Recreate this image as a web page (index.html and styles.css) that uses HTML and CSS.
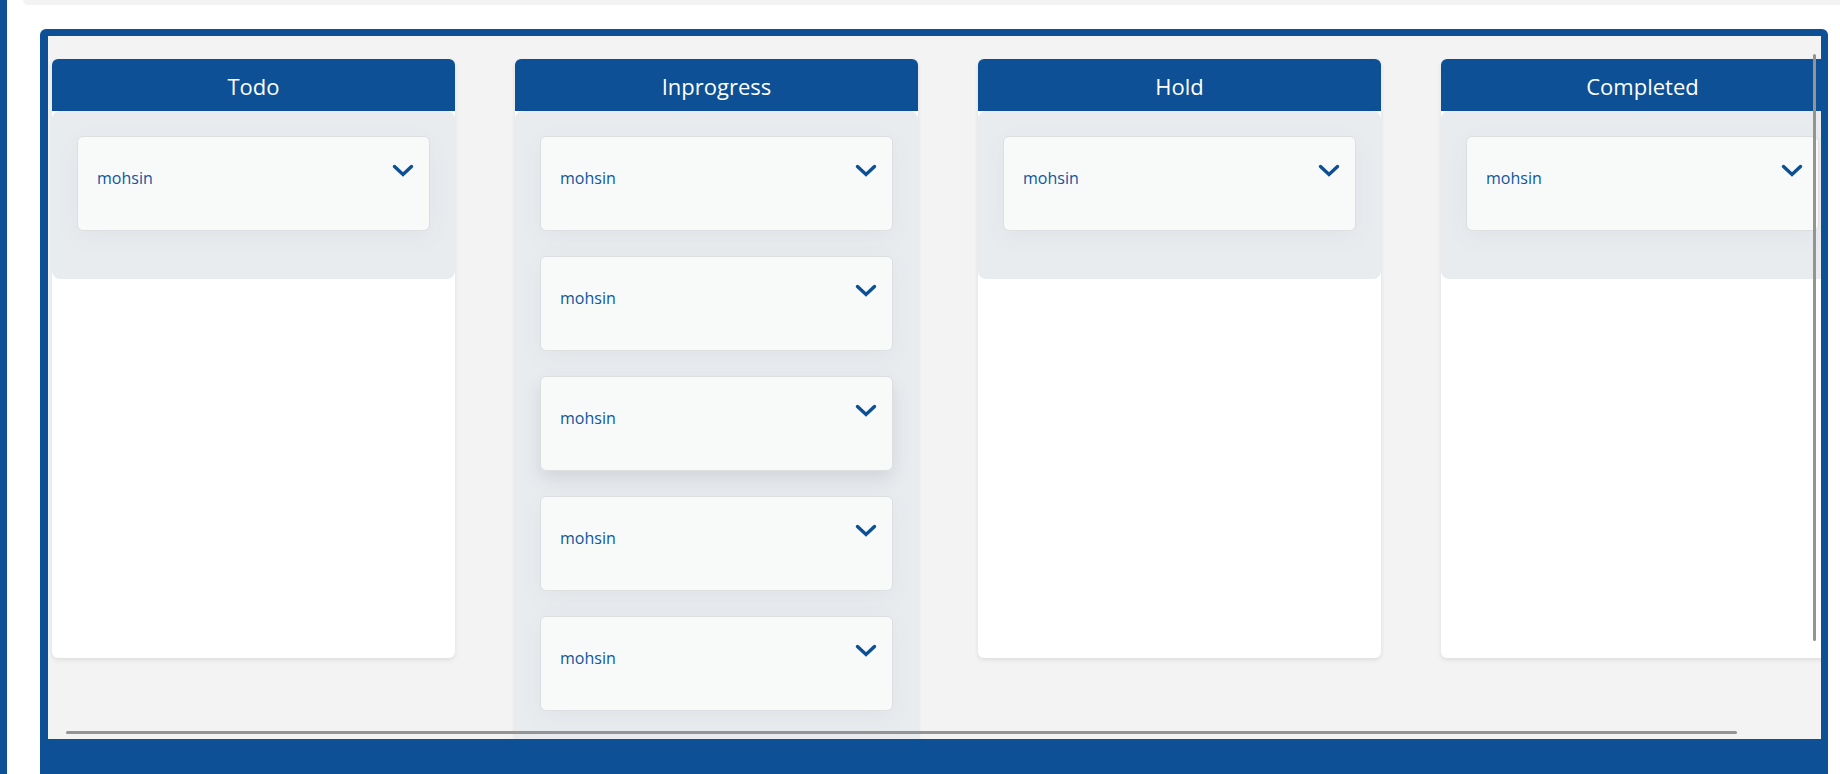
FILE: index.html
```html
<!DOCTYPE html>
<html lang="en">
<head>
<meta charset="utf-8">
<title>Board</title>
<link rel="stylesheet" href="styles.css">
</head>
<body>
<div class="page">
  <div class="strip"></div>
  <div class="main">
    <div class="topbar"></div>
    <div class="frame">
      <div class="board">
        <div class="lanes">
          <section class="lane">
            <header class="lane-head">Todo</header>
            <div class="lane-body">
              <div class="card"><span class="card-name">mohsin</span><svg class="chev" viewBox="0 0 22 14" width="22" height="14"><polyline points="2.5,2.5 11,10.5 19.5,2.5"/></svg></div>
            </div>
          </section>
          <section class="lane">
            <header class="lane-head">Inprogress</header>
            <div class="lane-body">
              <div class="card"><span class="card-name">mohsin</span><svg class="chev" viewBox="0 0 22 14" width="22" height="14"><polyline points="2.5,2.5 11,10.5 19.5,2.5"/></svg></div>
              <div class="card"><span class="card-name">mohsin</span><svg class="chev" viewBox="0 0 22 14" width="22" height="14"><polyline points="2.5,2.5 11,10.5 19.5,2.5"/></svg></div>
              <div class="card card-hover"><span class="card-name">mohsin</span><svg class="chev" viewBox="0 0 22 14" width="22" height="14"><polyline points="2.5,2.5 11,10.5 19.5,2.5"/></svg></div>
              <div class="card"><span class="card-name">mohsin</span><svg class="chev" viewBox="0 0 22 14" width="22" height="14"><polyline points="2.5,2.5 11,10.5 19.5,2.5"/></svg></div>
              <div class="card"><span class="card-name">mohsin</span><svg class="chev" viewBox="0 0 22 14" width="22" height="14"><polyline points="2.5,2.5 11,10.5 19.5,2.5"/></svg></div>
            </div>
          </section>
          <section class="lane">
            <header class="lane-head">Hold</header>
            <div class="lane-body">
              <div class="card"><span class="card-name">mohsin</span><svg class="chev" viewBox="0 0 22 14" width="22" height="14"><polyline points="2.5,2.5 11,10.5 19.5,2.5"/></svg></div>
            </div>
          </section>
          <section class="lane">
            <header class="lane-head">Completed</header>
            <div class="lane-body">
              <div class="card"><span class="card-name">mohsin</span><svg class="chev" viewBox="0 0 22 14" width="22" height="14"><polyline points="2.5,2.5 11,10.5 19.5,2.5"/></svg></div>
            </div>
          </section>
        </div>
        <div class="thumb thumb-v"></div>
        <div class="thumb thumb-h"></div>
      </div>
    </div>
  </div>
</div>
</body>
</html>
```
FILE: styles.css
```css
* { box-sizing: border-box; }
html, body { margin: 0; padding: 0; }
body {
  background: #ffffff;
  font-family: "Open Sans", "Noto Sans", sans-serif;
  overflow: hidden;
}
.page {
  display: flex;
  height: 774px;
}
.strip {
  width: 7px;
  flex-shrink: 0;
  background: #0d5095;
}
.main {
  flex: 1;
  min-width: 0;
  padding-left: 16px;
  display: flex;
  flex-direction: column;
}
.topbar {
  height: 5px;
  background: #f3f3f3;
  border-bottom-left-radius: 5px;
}
.frame {
  margin: 24px 12px 0 17px;
  flex: 1;
  min-width: 0;
  background: #0d5095;
  border-radius: 6px 6px 0 0;
  padding: 7px 7px 0 8px;
}
.board {
  position: relative;
  height: 703px;
  background: #f3f3f3;
  overflow: hidden;
}
.lanes {
  display: flex;
  gap: 60px;
  padding: 23px 0 0 4px;
  align-items: flex-start;
}
.lane {
  width: 403px;
  flex-shrink: 0;
  min-height: 599px;
  background: #ffffff;
  border-radius: 6px;
  box-shadow: 0 2px 5px rgba(0, 0, 0, 0.09);
}
.lane-head {
  height: 52px;
  padding-top: 3px;
  line-height: 48px;
  text-align: center;
  color: #ffffff;
  font-size: 22px;
  background: #0d5095;
  border-radius: 6px 6px 0 0;
}
.lane-body {
  background: #e9ecef;
  border-radius: 8px;
  padding: 25px 25px 23px 25px;
}
.card {
  height: 95px;
  display: flex;
  justify-content: space-between;
  align-items: flex-start;
  padding: 0 15px 0 19px;
  margin-bottom: 25px;
  background: #f8f9f9;
  border: 1px solid #dcdee0;
  border-radius: 6px;
  box-shadow: 0 6px 24px rgba(60, 70, 90, 0.05);
}
.card-hover {
  box-shadow: 0 8px 18px rgba(40, 50, 70, 0.12);
}
.card-name {
  margin-top: 29px;
  font-size: 16px;
  line-height: 24px;
  color: #0e56a0;
}
.chev {
  margin-top: 27px;
  fill: none;
  stroke: #0d4f94;
  stroke-width: 3.4;
  stroke-linecap: round;
  stroke-linejoin: miter;
}
.thumb {
  position: absolute;
  background: #949494;
  border-radius: 2px;
}
.thumb-v {
  left: 1765px;
  top: 18px;
  width: 3px;
  height: 587px;
}
.thumb-h {
  left: 18px;
  top: 695px;
  width: 1671px;
  height: 3px;
}
```
